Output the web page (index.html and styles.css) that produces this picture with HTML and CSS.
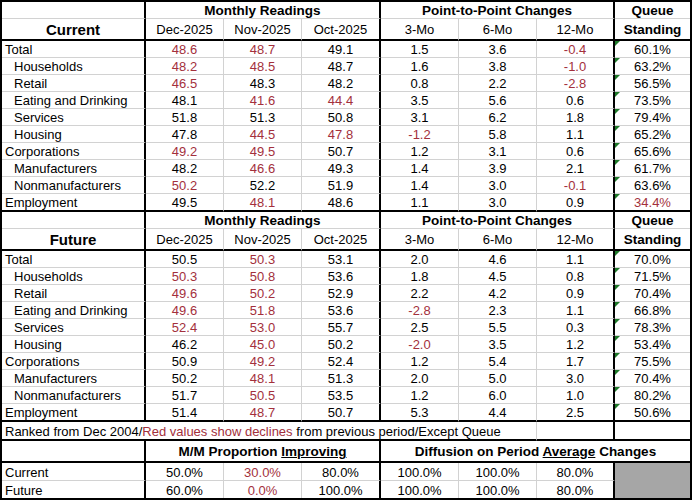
FILE: index.html
```html
<!DOCTYPE html>
<html lang="en">
<head>
<meta charset="utf-8">
<title>Readings</title>
<link rel="stylesheet" href="styles.css">
</head>
<body>
<div class="sheet">
  <!-- Current block header -->
  <div class="c tr"></div>
  <div class="c s3 tr b">Monthly Readings</div>
  <div class="c s3 tr b">Point-to-Point Changes</div>
  <div class="c nr b">Queue</div>

  <div class="c tr tb big">Current</div>
  <div class="c tb">Dec-2025</div>
  <div class="c tb">Nov-2025</div>
  <div class="c tb tr">Oct-2025</div>
  <div class="c tb">3-Mo</div>
  <div class="c tb">6-Mo</div>
  <div class="c tb tr">12-Mo</div>
  <div class="c tb nr b">Standing</div>

  <div class="c tr lbl">Total</div>
  <div class="c r">48.6</div><div class="c r">48.7</div><div class="c tr">49.1</div>
  <div class="c">1.5</div><div class="c">3.6</div><div class="c tr r">-0.4</div>
  <div class="c nr q">60.1%</div>

  <div class="c tr lbl ind">Households</div>
  <div class="c r">48.2</div><div class="c r">48.5</div><div class="c tr">48.7</div>
  <div class="c">1.6</div><div class="c">3.8</div><div class="c tr r">-1.0</div>
  <div class="c nr q">63.2%</div>

  <div class="c tr lbl ind">Retail</div>
  <div class="c r">46.5</div><div class="c">48.3</div><div class="c tr">48.2</div>
  <div class="c">0.8</div><div class="c">2.2</div><div class="c tr r">-2.8</div>
  <div class="c nr q">56.5%</div>

  <div class="c tr lbl ind">Eating and Drinking</div>
  <div class="c">48.1</div><div class="c r">41.6</div><div class="c tr r">44.4</div>
  <div class="c">3.5</div><div class="c">5.6</div><div class="c tr">0.6</div>
  <div class="c nr q">73.5%</div>

  <div class="c tr lbl ind">Services</div>
  <div class="c">51.8</div><div class="c">51.3</div><div class="c tr">50.8</div>
  <div class="c">3.1</div><div class="c">6.2</div><div class="c tr">1.8</div>
  <div class="c nr q">79.4%</div>

  <div class="c tr lbl ind">Housing</div>
  <div class="c">47.8</div><div class="c r">44.5</div><div class="c tr r">47.8</div>
  <div class="c r">-1.2</div><div class="c">5.8</div><div class="c tr">1.1</div>
  <div class="c nr q">65.2%</div>

  <div class="c tr lbl">Corporations</div>
  <div class="c r">49.2</div><div class="c r">49.5</div><div class="c tr">50.7</div>
  <div class="c">1.2</div><div class="c">3.1</div><div class="c tr">0.6</div>
  <div class="c nr q">65.6%</div>

  <div class="c tr lbl ind">Manufacturers</div>
  <div class="c">48.2</div><div class="c r">46.6</div><div class="c tr">49.3</div>
  <div class="c">1.4</div><div class="c">3.9</div><div class="c tr">2.1</div>
  <div class="c nr q">61.7%</div>

  <div class="c tr lbl ind">Nonmanufacturers</div>
  <div class="c r">50.2</div><div class="c">52.2</div><div class="c tr">51.9</div>
  <div class="c">1.4</div><div class="c">3.0</div><div class="c tr r">-0.1</div>
  <div class="c nr q">63.6%</div>

  <div class="c tr tb lbl">Employment</div>
  <div class="c tb">49.5</div><div class="c tb r">48.1</div><div class="c tb tr">48.6</div>
  <div class="c tb">1.1</div><div class="c tb">3.0</div><div class="c tb tr">0.9</div>
  <div class="c tb nr q r">34.4%</div>

  <!-- Future block header -->
  <div class="c tr"></div>
  <div class="c s3 tr b">Monthly Readings</div>
  <div class="c s3 tr b">Point-to-Point Changes</div>
  <div class="c nr b">Queue</div>

  <div class="c tr tb big">Future</div>
  <div class="c tb">Dec-2025</div>
  <div class="c tb">Nov-2025</div>
  <div class="c tb tr">Oct-2025</div>
  <div class="c tb">3-Mo</div>
  <div class="c tb">6-Mo</div>
  <div class="c tb tr">12-Mo</div>
  <div class="c tb nr b">Standing</div>

  <div class="c tr lbl">Total</div>
  <div class="c">50.5</div><div class="c r">50.3</div><div class="c tr">53.1</div>
  <div class="c">2.0</div><div class="c">4.6</div><div class="c tr">1.1</div>
  <div class="c nr q">70.0%</div>

  <div class="c tr lbl ind">Households</div>
  <div class="c r">50.3</div><div class="c r">50.8</div><div class="c tr">53.6</div>
  <div class="c">1.8</div><div class="c">4.5</div><div class="c tr">0.8</div>
  <div class="c nr q">71.5%</div>

  <div class="c tr lbl ind">Retail</div>
  <div class="c r">49.6</div><div class="c r">50.2</div><div class="c tr">52.9</div>
  <div class="c">2.2</div><div class="c">4.2</div><div class="c tr">0.9</div>
  <div class="c nr q">70.4%</div>

  <div class="c tr lbl ind">Eating and Drinking</div>
  <div class="c r">49.6</div><div class="c r">51.8</div><div class="c tr">53.6</div>
  <div class="c r">-2.8</div><div class="c">2.3</div><div class="c tr">1.1</div>
  <div class="c nr q">66.8%</div>

  <div class="c tr lbl ind">Services</div>
  <div class="c r">52.4</div><div class="c r">53.0</div><div class="c tr">55.7</div>
  <div class="c">2.5</div><div class="c">5.5</div><div class="c tr">0.3</div>
  <div class="c nr q">78.3%</div>

  <div class="c tr lbl ind">Housing</div>
  <div class="c">46.2</div><div class="c r">45.0</div><div class="c tr">50.2</div>
  <div class="c r">-2.0</div><div class="c">3.5</div><div class="c tr">1.2</div>
  <div class="c nr q">53.4%</div>

  <div class="c tr lbl">Corporations</div>
  <div class="c">50.9</div><div class="c r">49.2</div><div class="c tr">52.4</div>
  <div class="c">1.2</div><div class="c">5.4</div><div class="c tr">1.7</div>
  <div class="c nr q">75.5%</div>

  <div class="c tr lbl ind">Manufacturers</div>
  <div class="c">50.2</div><div class="c r">48.1</div><div class="c tr">51.3</div>
  <div class="c">2.0</div><div class="c">5.0</div><div class="c tr">3.0</div>
  <div class="c nr q">70.4%</div>

  <div class="c tr lbl ind">Nonmanufacturers</div>
  <div class="c">51.7</div><div class="c r">50.5</div><div class="c tr">53.5</div>
  <div class="c">1.2</div><div class="c">6.0</div><div class="c tr">1.0</div>
  <div class="c nr q">80.2%</div>

  <div class="c tr tb lbl">Employment</div>
  <div class="c tb">51.4</div><div class="c tb r">48.7</div><div class="c tb tr">50.7</div>
  <div class="c tb">5.3</div><div class="c tb">4.4</div><div class="c tb tr">2.5</div>
  <div class="c tb nr q">50.6%</div>

  <!-- Note row -->
  <div class="c s6 tb lbl"><span>Ranked from Dec 2004/<span class="r">Red values show declines</span> from previous period/Except Queue</span></div>
  <div class="c tb tr"></div>
  <div class="c tb nr"></div>

  <!-- Summary block -->
  <div class="c tr tb"></div>
  <div class="c s3 tr tb b"><span>M/M Proportion <u>Improving</u></span></div>
  <div class="c s4 nr tb b"><span>Diffusion on Period <u>Average</u> Changes</span></div>

  <div class="c tr lbl">Current</div>
  <div class="c">50.0%</div><div class="c r">30.0%</div><div class="c tr">80.0%</div>
  <div class="c">100.0%</div><div class="c">100.0%</div><div class="c tr">80.0%</div>
  <div class="c nr gray"></div>

  <div class="c tr lbl last">Future</div>
  <div class="c last">60.0%</div><div class="c r last">0.0%</div><div class="c tr last">100.0%</div>
  <div class="c last">100.0%</div><div class="c last">100.0%</div><div class="c tr last">80.0%</div>
</div>
</body>
</html>
```

FILE: styles.css
```css
html, body {
  margin: 0;
  padding: 0;
  background: #ffffff;
}

.sheet {
  box-sizing: border-box;
  width: 692px;
  height: 500px;
  border: 2px solid #000;
  display: grid;
  grid-template-columns: 144px 78px 78px 79px 78px 78px 78px 75px;
  grid-template-rows:
    17px 22px repeat(9, 17px) 18px
    17px 22px repeat(9, 17px) 18px
    19px 22px 18px 17px;
  font-family: "Liberation Sans", Arial, sans-serif;
  font-size: 13px;
  color: #000;
}

.c {
  box-sizing: border-box;
  display: flex;
  align-items: center;
  justify-content: center;
  border-right: 1px solid #d2d2d2;
  border-bottom: 1px solid #d2d2d2;
  white-space: nowrap;
  line-height: 15px;
  padding-top: 1px;
  position: relative;
}

.s3 { grid-column: span 3; }
.s4 { grid-column: span 4; }
.s6 { grid-column: span 6; }

.tr { border-right: 2px solid #000; }
.tb { border-bottom: 2px solid #000; }
.nr { border-right: 0; }
.last { border-bottom: 0; }

.b {
  font-weight: bold;
  font-size: 13.5px;
}

.big {
  font-weight: bold;
  font-size: 15px;
}

.lbl {
  justify-content: flex-start;
  padding-left: 3px;
}

.ind { padding-left: 12px; }

.r { color: #a3303c; }

.q::before {
  content: "";
  position: absolute;
  left: 0;
  top: 0;
  width: 0;
  height: 0;
  border-top: 5px solid #1f7a2a;
  border-right: 5px solid transparent;
}

.gray {
  grid-row: span 2;
  background: #a6a6a6;
  border-bottom: 0;
}
```
